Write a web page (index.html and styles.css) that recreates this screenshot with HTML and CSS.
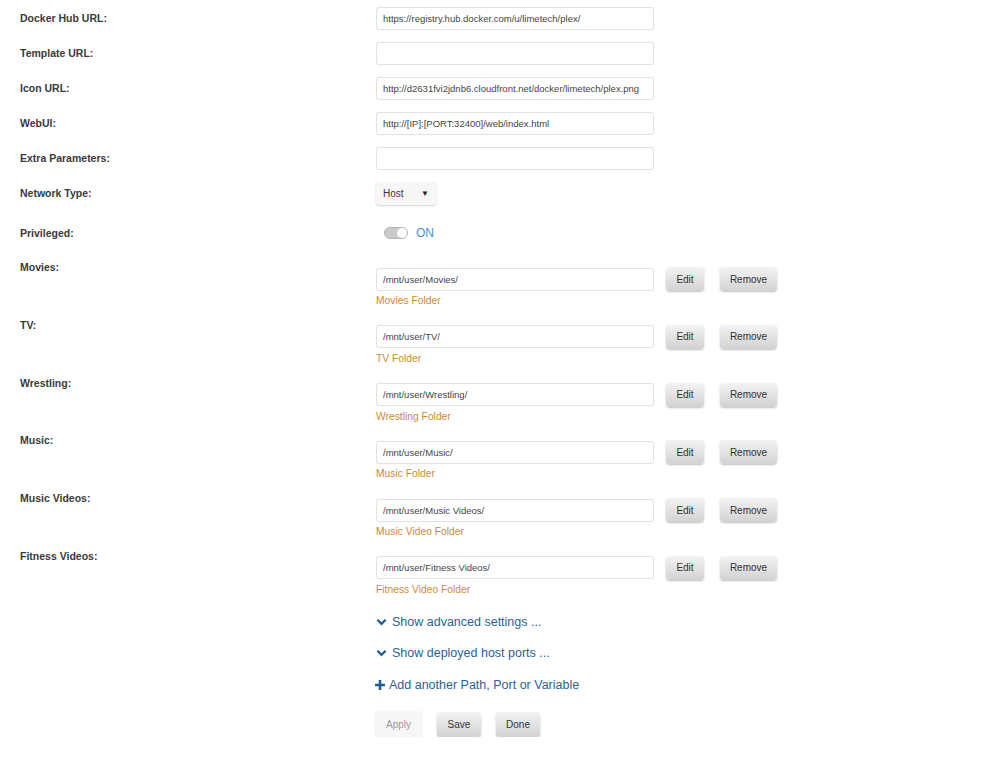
FILE: index.html
```html
<!DOCTYPE html>
<html lang="en">

<head>
    <meta charset="UTF-8">
    <meta name="viewport" content="width=device-width, initial-scale=1.0">
    <title>Edit Container</title>
    <link rel="stylesheet" href="styles.css">
</head>

<body>
    <form class="container-form">
        <!-- General settings -->
        <div class="row">
            <label class="label">Docker Hub URL:</label>
            <div class="field"><input type="text" class="text-input" value="https://registry.hub.docker.com/u/limetech/plex/"></div>
        </div>
        <div class="row">
            <label class="label">Template URL:</label>
            <div class="field"><input type="text" class="text-input" value=""></div>
        </div>
        <div class="row">
            <label class="label">Icon URL:</label>
            <div class="field"><input type="text" class="text-input" value="http://d2631fvi2jdnb6.cloudfront.net/docker/limetech/plex.png"></div>
        </div>
        <div class="row">
            <label class="label">WebUI:</label>
            <div class="field"><input type="text" class="text-input" value="http://[IP]:[PORT:32400]/web/index.html"></div>
        </div>
        <div class="row">
            <label class="label">Extra Parameters:</label>
            <div class="field"><input type="text" class="text-input" value=""></div>
        </div>
        <div class="row">
            <label class="label">Network Type:</label>
            <div class="field">
                <div class="select">Host<span class="caret">&#9660;</span></div>
            </div>
        </div>
        <div class="row row-tall">
            <label class="label">Privileged:</label>
            <div class="field">
                <span class="switch"><span class="knob"></span></span>
                <span class="switch-text">ON</span>
            </div>
        </div>

        <!-- Volume mappings -->
        <div class="row path-row">
            <label class="label">Movies:</label>
            <div class="field">
                <div class="path-line">
                    <input type="text" class="text-input" value="/mnt/user/Movies/">
                    <button type="button" class="btn btn-edit">Edit</button>
                    <button type="button" class="btn btn-remove">Remove</button>
                </div>
                <div class="path-desc">Movies Folder</div>
            </div>
        </div>
        <div class="row path-row">
            <label class="label">TV:</label>
            <div class="field">
                <div class="path-line">
                    <input type="text" class="text-input" value="/mnt/user/TV/">
                    <button type="button" class="btn btn-edit">Edit</button>
                    <button type="button" class="btn btn-remove">Remove</button>
                </div>
                <div class="path-desc">TV Folder</div>
            </div>
        </div>
        <div class="row path-row">
            <label class="label">Wrestling:</label>
            <div class="field">
                <div class="path-line">
                    <input type="text" class="text-input" value="/mnt/user/Wrestling/">
                    <button type="button" class="btn btn-edit">Edit</button>
                    <button type="button" class="btn btn-remove">Remove</button>
                </div>
                <div class="path-desc">Wrestling Folder</div>
            </div>
        </div>
        <div class="row path-row">
            <label class="label">Music:</label>
            <div class="field">
                <div class="path-line">
                    <input type="text" class="text-input" value="/mnt/user/Music/">
                    <button type="button" class="btn btn-edit">Edit</button>
                    <button type="button" class="btn btn-remove">Remove</button>
                </div>
                <div class="path-desc">Music Folder</div>
            </div>
        </div>
        <div class="row path-row">
            <label class="label">Music Videos:</label>
            <div class="field">
                <div class="path-line">
                    <input type="text" class="text-input" value="/mnt/user/Music Videos/">
                    <button type="button" class="btn btn-edit">Edit</button>
                    <button type="button" class="btn btn-remove">Remove</button>
                </div>
                <div class="path-desc">Music Video Folder</div>
            </div>
        </div>
        <div class="row path-row">
            <label class="label">Fitness Videos:</label>
            <div class="field">
                <div class="path-line">
                    <input type="text" class="text-input" value="/mnt/user/Fitness Videos/">
                    <button type="button" class="btn btn-edit">Edit</button>
                    <button type="button" class="btn btn-remove">Remove</button>
                </div>
                <div class="path-desc">Fitness Video Folder</div>
            </div>
        </div>

        <!-- Toggles and actions -->
        <div class="links">
            <a class="link" href="#">
                <svg class="chevron" viewBox="0 0 12 8" width="11" height="8"><path d="M1.5 1.5 L6 6 L10.5 1.5" fill="none" stroke="currentColor" stroke-width="2.4"/></svg>
                Show advanced settings ...
            </a>
            <a class="link" href="#">
                <svg class="chevron" viewBox="0 0 12 8" width="11" height="8"><path d="M1.5 1.5 L6 6 L10.5 1.5" fill="none" stroke="currentColor" stroke-width="2.4"/></svg>
                Show deployed host ports ...
            </a>
            <a class="link link-add" href="#">
                <svg class="plus" viewBox="0 0 10 10" width="10" height="10"><path d="M5 0 V10 M0 5 H10" stroke="currentColor" stroke-width="2.6"/></svg>
                Add another Path, Port or Variable
            </a>
        </div>

        <div class="actions">
            <button type="button" class="btn btn-disabled">Apply</button>
            <button type="button" class="btn btn-action">Save</button>
            <button type="button" class="btn btn-action">Done</button>
        </div>
    </form>
</body>

</html>
```

FILE: styles.css
```css
body {
    font-family: "Liberation Sans", Arial, sans-serif;
    margin: 0;
    padding: 0;
    background-color: #ffffff;
    color: #333333;
}

.container-form {
    padding: 0 0 0 20px;
}

.row {
    display: grid;
    grid-template-columns: 356px 1fr;
    align-items: center;
    height: 35px;
}

.row:first-child {
    margin-top: 1px;
}

.row-tall {
    height: 44px;
}

.label {
    font-size: 10.5px;
    font-weight: bold;
    color: #3a3a3a;
    line-height: 14px;
    margin-top: -1px;
}

.field {
    display: flex;
    align-items: center;
}

.text-input {
    width: 278px;
    height: 23px;
    box-sizing: border-box;
    border: 1px solid #e2e2e2;
    border-radius: 3px;
    padding: 0 6px;
    font-family: "Liberation Sans", Arial, sans-serif;
    font-size: 9.5px;
    color: #444444;
    background-color: #ffffff;
    box-shadow: 0 0 1px rgba(0, 0, 0, 0.08);
}

/* dropdown for the network type */
.select {
    width: 60px;
    height: 23px;
    box-sizing: border-box;
    padding: 0 7px;
    display: flex;
    align-items: center;
    justify-content: space-between;
    font-size: 10px;
    color: #333333;
    background-color: #f7f7f7;
    border-radius: 3px;
    box-shadow: 0 1px 2px rgba(0, 0, 0, 0.18);
}

.caret {
    font-size: 8px;
    color: #222222;
}

.switch {
    margin-left: 8px;
    width: 24px;
    height: 12px;
    box-sizing: border-box;
    border-radius: 6px;
    background-color: #c9c9c9;
    border: 1px solid #b5b5b5;
    display: flex;
    justify-content: flex-end;
}

.knob {
    width: 10px;
    height: 10px;
    border-radius: 5px;
    background-color: #ffffff;
}

.switch-text {
    margin-left: 8px;
    font-size: 12px;
    color: #4a8fd0;
}

/* path rows: label on top line, input with buttons below */
.path-row {
    height: 57.8px;
    align-items: start;
}

.path-row .label {
    padding-top: 6px;
}

.path-row .field {
    flex-direction: column;
    align-items: flex-start;
    padding-top: 12px;
}

.path-line {
    display: flex;
    align-items: center;
}

.path-desc {
    font-size: 10.3px;
    color: #cc8a35;
    line-height: 14px;
    margin-top: 3px;
}

.btn {
    font-family: "Liberation Sans", Arial, sans-serif;
    font-size: 10px;
    color: #333333;
    height: 24px;
    border: none;
    border-radius: 4px;
    background: linear-gradient(#f3f3f3, #d2d2d2);
    box-shadow: 0 1px 2px rgba(0, 0, 0, 0.25);
    cursor: pointer;
    padding: 0;
}

.btn-edit {
    width: 38px;
    margin-left: 12px;
}

.btn-remove {
    width: 57px;
    margin-left: 16px;
}

.links {
    padding: 4px 0 0 355px;
}

.link {
    display: flex;
    align-items: center;
    height: 31.5px;
    font-size: 12.5px;
    color: #2e5f95;
    text-decoration: none;
}

.chevron {
    color: #1d5b99;
    margin-right: 5px;
    margin-left: 1px;
}

.plus {
    color: #1d5b99;
    margin-right: 4px;
}

.actions {
    padding: 12px 0 0 355px;
    display: flex;
    gap: 15px;
}

.btn-disabled {
    width: 47px;
    height: 25px;
    color: #9a9a9a;
    background: #f6f6f6;
    box-shadow: 0 0 2px rgba(0, 0, 0, 0.12);
}

.btn-action {
    width: 44px;
    height: 25px;
}
```
